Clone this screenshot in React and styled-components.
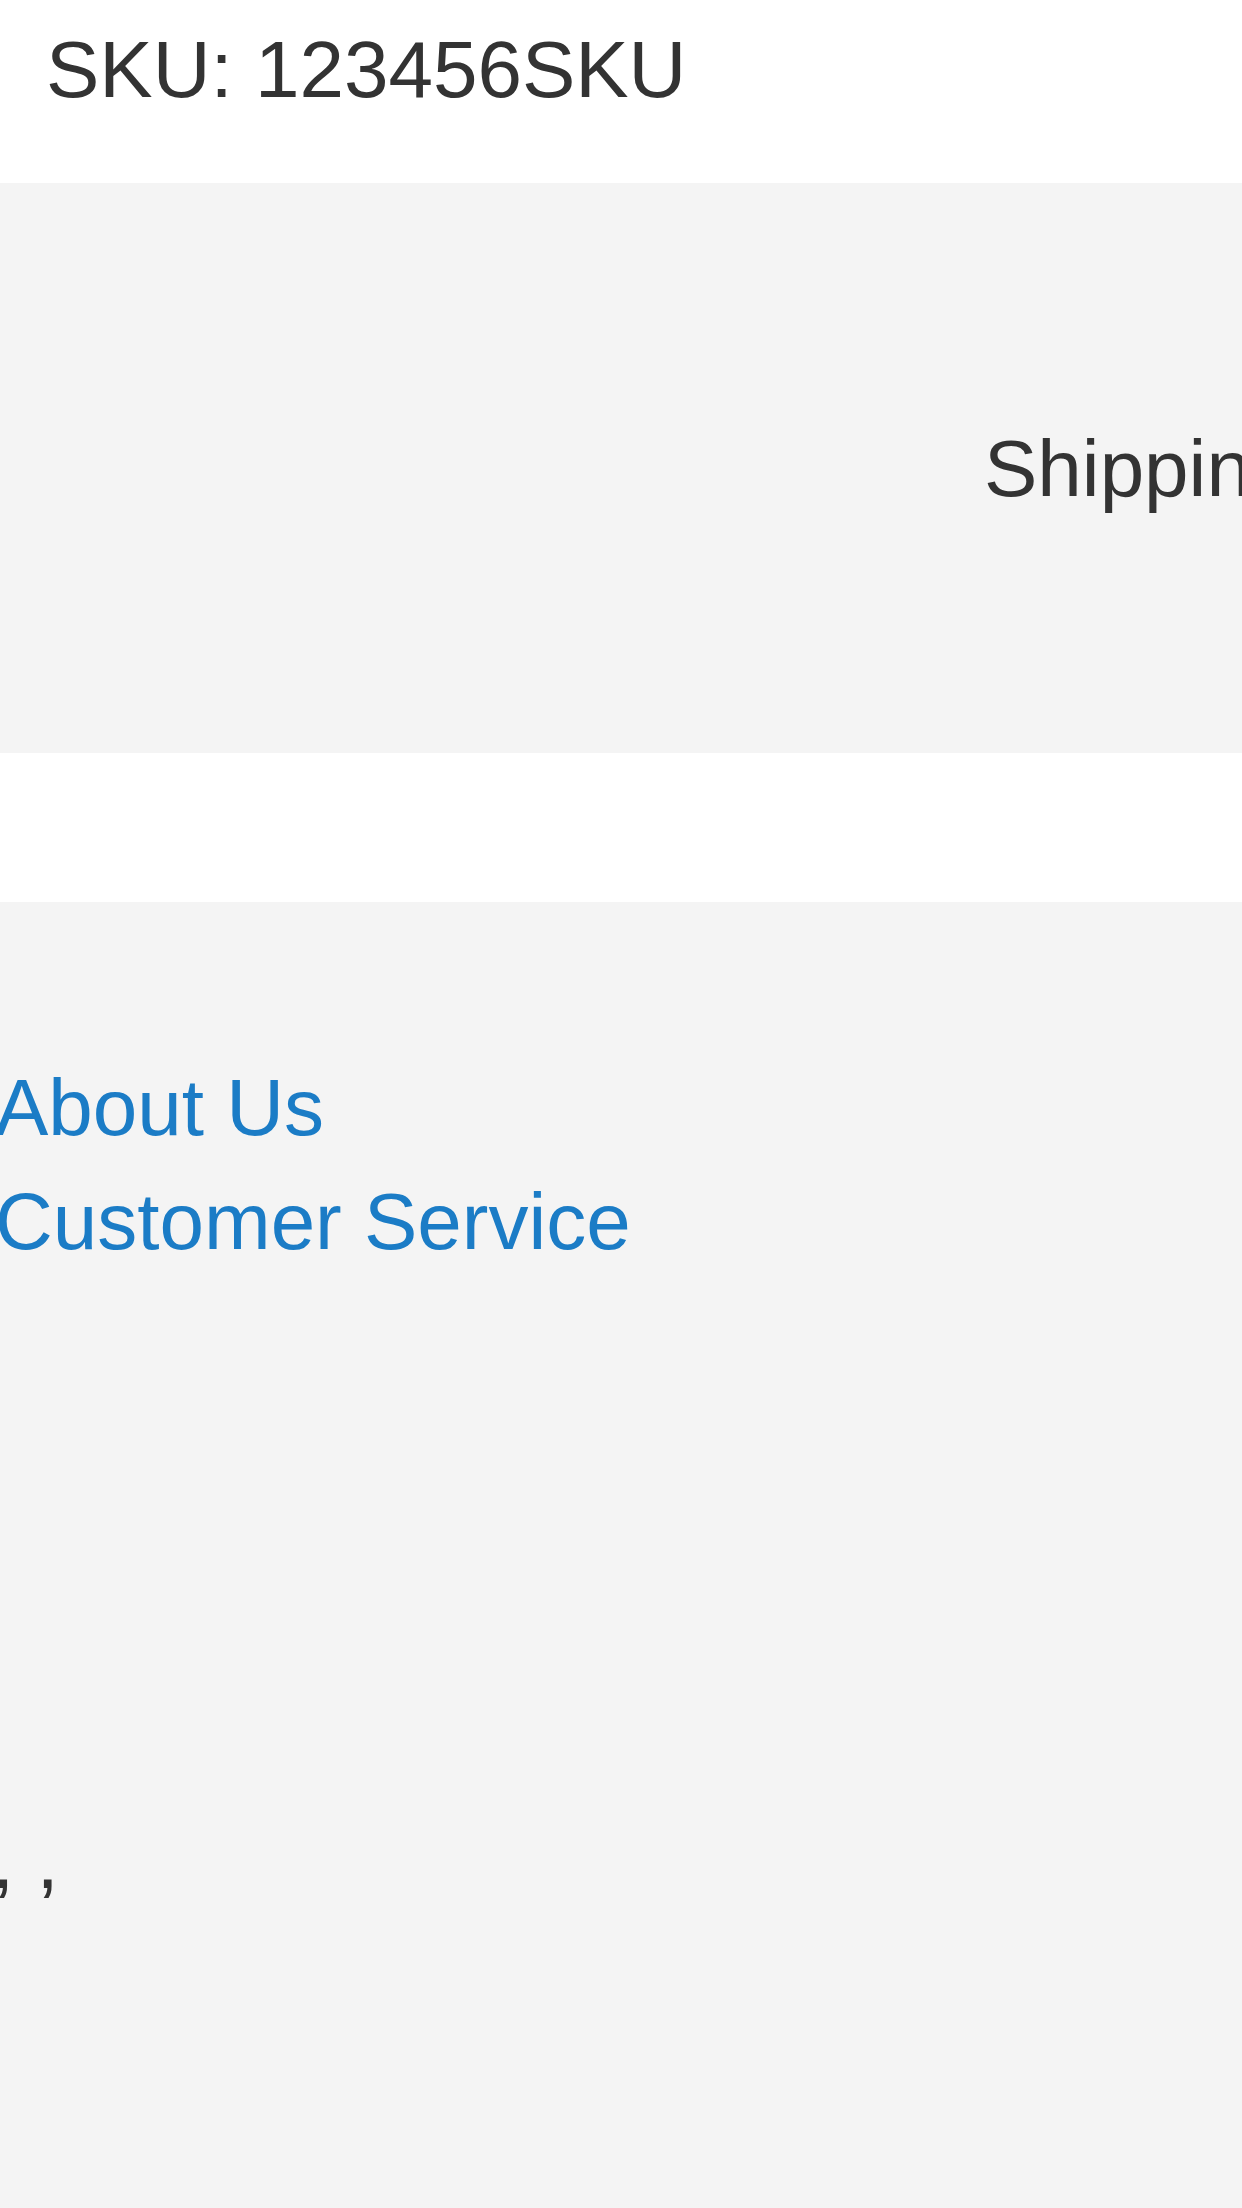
import React from 'react';
import styled, { createGlobalStyle } from 'styled-components';

const GlobalStyle = createGlobalStyle`
  html, body {
    margin: 0;
    padding: 0;
    overflow: hidden;
    background: #ffffff;
  }
  body {
    font-family: 'Liberation Sans', Arial, Helvetica, sans-serif;
    color: #333333;
  }
`;

const PageStyle = styled.div`
  display: flex;
  flex-direction: column;
  min-height: 2208px;
  width: 1242px;
  overflow: hidden;
`;

const Label = styled.span`
  display: block;
  font-size: 80px;
  line-height: 80px;
  white-space: nowrap;
  color: ${(p) => (p.$link ? '#1b7cc6' : '#333333')};
`;

const SkuBar = styled.div`
  height: 183px;
  box-sizing: border-box;
  padding: 30px 0 0 46px;
  background: #ffffff;
`;

const TabsBand = styled.div`
  height: 570px;
  box-sizing: border-box;
  padding: 246px 0 0 984px;
  background: #f4f4f4;
  overflow: hidden;
`;

const Spacer = styled.div`
  height: 149px;
  background: #ffffff;
`;

const FooterStyle = styled.footer`
  flex: 1;
  background: #f4f4f4;
  padding: 166px 0 0;
  display: flex;
  flex-direction: column;
  gap: 559px;
`;

const LinkList = styled.ul`
  list-style: none;
  margin: 0 0 0 -5px;
  padding: 0;
  display: flex;
  flex-direction: column;
  gap: 34px;
  a {
    text-decoration: none;
  }
`;

const Address = styled.address`
  font-style: normal;
  margin-left: -8px;
`;

export default function App() {
  return (
    <PageStyle>
      <GlobalStyle />
      <SkuBar>
        <Label>SKU: 123456SKU</Label>
      </SkuBar>
      <TabsBand>
        <Label>Shipping &amp; Returns</Label>
      </TabsBand>
      <Spacer />
      <FooterStyle>
        <LinkList>
          <li>
            <a href='#about'>
              <Label $link>About Us</Label>
            </a>
          </li>
          <li>
            <a href='#service'>
              <Label $link>Customer Service</Label>
            </a>
          </li>
        </LinkList>
        <Address>
          <Label>, ,</Label>
        </Address>
      </FooterStyle>
    </PageStyle>
  );
}
